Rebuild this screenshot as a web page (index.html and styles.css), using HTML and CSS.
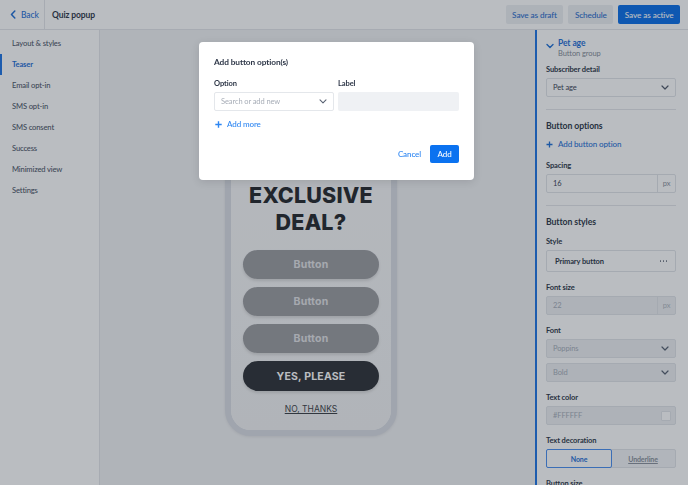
FILE: index.html
```html
<!DOCTYPE html>
<html lang="en">
<head>
<meta charset="utf-8">
<title>Quiz popup</title>
<link rel="stylesheet" href="styles.css">
</head>
<body>
<div class="app">
  <header class="topbar">
    <a class="back" href="#">
      <svg class="back-icon" width="6" height="9" viewBox="0 0 6 9"><path d="M4.8 1 L1.5 4.5 L4.8 8" fill="none" stroke="currentColor" stroke-width="1.5" stroke-linecap="round" stroke-linejoin="round"/></svg>
      <span>Back</span>
    </a>
    <div class="page-title">Quiz popup</div>
    <div class="actions">
      <button class="btn btn-secondary">Save as draft</button>
      <button class="btn btn-secondary">Schedule</button>
      <button class="btn btn-primary">Save as active</button>
    </div>
  </header>

  <div class="workspace">
    <nav class="sidebar">
      <a class="nav-item">Layout &amp; styles</a>
      <a class="nav-item active">Teaser</a>
      <a class="nav-item">Email opt-in</a>
      <a class="nav-item">SMS opt-in</a>
      <a class="nav-item">SMS consent</a>
      <a class="nav-item">Success</a>
      <a class="nav-item">Minimized view</a>
      <a class="nav-item">Settings</a>
    </nav>

    <main class="canvas">
      <div class="phone">
        <div class="phone-screen">
          <h1 class="headline">EXCLUSIVE<br>DEAL?</h1>
          <div class="quiz-buttons">
            <div class="quiz-btn">Button</div>
            <div class="quiz-btn">Button</div>
            <div class="quiz-btn">Button</div>
            <div class="quiz-btn quiz-btn-yes">YES, PLEASE</div>
          </div>
          <div class="no-thanks">NO, THANKS</div>
        </div>
      </div>
    </main>

    <aside class="panel">
      <div class="panel-head">
        <svg class="head-chevron" width="8" height="6" viewBox="0 0 8 6"><path d="M1 1.5 L4 4.5 L7 1.5" fill="none" stroke="currentColor" stroke-width="1.4" stroke-linecap="round" stroke-linejoin="round"/></svg>
        <div>
          <div class="head-title">Pet age</div>
          <div class="head-sub">Button group</div>
        </div>
      </div>

      <div class="field">
        <div class="field-label">Subscriber detail</div>
        <div class="control select"><span>Pet age</span><svg width="8" height="5" viewBox="0 0 8 5"><path d="M1 1 L4 4 L7 1" fill="none" stroke="currentColor" stroke-width="1.2" stroke-linecap="round" stroke-linejoin="round"/></svg></div>
      </div>

      <hr class="sep">

      <div class="section-title">Button options</div>
      <a class="link-add">
        <svg width="7" height="7" viewBox="0 0 7 7"><path d="M3.5 0.5 V6.5 M0.5 3.5 H6.5" stroke="currentColor" stroke-width="1.3"/></svg>
        <span>Add button option</span>
      </a>

      <div class="field">
        <div class="field-label">Spacing</div>
        <div class="control input-unit"><span class="val">16</span><span class="unit">px</span></div>
      </div>

      <hr class="sep">

      <div class="section-title">Button styles</div>

      <div class="field">
        <div class="field-label">Style</div>
        <div class="control style-box"><span class="style-name">Primary button</span><span class="dots"><i></i><i></i><i></i></span></div>
      </div>

      <div class="field">
        <div class="field-label">Font size</div>
        <div class="control input-unit disabled"><span class="val">22</span><span class="unit">px</span></div>
      </div>

      <div class="field">
        <div class="field-label">Font</div>
        <div class="control select disabled"><span>Poppins</span><svg width="8" height="5" viewBox="0 0 8 5"><path d="M1 1 L4 4 L7 1" fill="none" stroke="currentColor" stroke-width="1.2" stroke-linecap="round" stroke-linejoin="round"/></svg></div>
        <div class="control select disabled second"><span>Bold</span><svg width="8" height="5" viewBox="0 0 8 5"><path d="M1 1 L4 4 L7 1" fill="none" stroke="currentColor" stroke-width="1.2" stroke-linecap="round" stroke-linejoin="round"/></svg></div>
      </div>

      <div class="field">
        <div class="field-label">Text color</div>
        <div class="control color disabled"><span>#FFFFFF</span><span class="swatch"></span></div>
      </div>

      <div class="field">
        <div class="field-label">Text decoration</div>
        <div class="segmented">
          <span class="seg selected">None</span>
          <span class="seg underline">Underline</span>
        </div>
      </div>

      <div class="field">
        <div class="field-label">Button size</div>
      </div>
    </aside>
  </div>
</div>

<div class="backdrop"></div>

<div class="modal">
  <div class="modal-title">Add button option(s)</div>
  <div class="modal-grid">
    <div class="modal-label">Option</div>
    <div class="modal-label">Label</div>
    <div class="modal-select"><span>Search or add new</span><svg width="8" height="5" viewBox="0 0 8 5"><path d="M1 0.8 L4 3.8 L7 0.8" fill="none" stroke="currentColor" stroke-width="1.1" stroke-linecap="round" stroke-linejoin="round"/></svg></div>
    <div class="modal-input"></div>
  </div>
  <a class="modal-add">
    <svg width="7" height="7" viewBox="0 0 7 7"><path d="M3.5 0.3 V6.7 M0.3 3.5 H6.7" stroke="currentColor" stroke-width="1.4"/></svg>
    <span>Add more</span>
  </a>
  <div class="modal-actions">
    <button class="m-cancel">Cancel</button>
    <button class="m-add">Add</button>
  </div>
</div>
</body>
</html>
```

FILE: styles.css
```css
* { box-sizing: border-box; }
html, body { margin: 0; padding: 0; }
body {
  width: 688px;
  height: 485px;
  overflow: hidden;
  font-family: "Lato", "Liberation Sans", sans-serif;
  letter-spacing: -0.1px;
  color: #2e3748;
  background: #fff;
}
button { font-family: inherit; letter-spacing: inherit; }

.app {
  display: flex;
  flex-direction: column;
  height: 485px;
}

/* top bar */
.topbar {
  height: 30px;
  flex: none;
  display: flex;
  align-items: center;
  background: #fff;
  border-bottom: 1px solid #e4e6ea;
}
.back {
  height: 100%;
  width: 45px;
  display: flex;
  align-items: center;
  gap: 5px;
  padding-left: 10px;
  color: #1f6fd6;
  text-decoration: none;
  font-size: 8.5px;
  font-weight: 500;
  border-right: 1px solid #e4e6ea;
}
.page-title {
  margin-left: 7px;
  font-size: 8.5px;
  font-weight: 700;
  color: #2e3748;
}
.actions {
  margin-left: auto;
  margin-right: 8px;
  display: flex;
  gap: 5px;
}
.btn {
  height: 19px;
  border: 0;
  border-radius: 2px;
  font-size: 8.2px;
  font-weight: 500;
  padding: 0 6.5px;
}
.btn-secondary { background: #eceff3; color: #2b6dcc; }
.btn-primary { background: #0b6fe8; color: #fff; }

/* workspace */
.workspace {
  flex: 1;
  display: flex;
  min-height: 0;
}
.sidebar {
  width: 100px;
  flex: none;
  background: #fff;
  border-right: 1px solid #e4e6ea;
  padding-top: 3px;
  display: flex;
  flex-direction: column;
}
.nav-item {
  height: 21px;
  line-height: 21px;
  padding-left: 10px;
  font-size: 7.6px;
  font-weight: 500;
  letter-spacing: -0.15px;
  color: #4f5869;
  border-left: 2px solid transparent;
}
.nav-item.active {
  color: #1f6fd6;
  font-weight: 700;
  border-left-color: #1f74e4;
}

/* canvas */
.canvas {
  flex: 1;
  background: #f1f2f4;
  display: flex;
  align-items: flex-end;
  padding-left: 125px;
  padding-bottom: 49px;
  overflow: hidden;
}
.phone {
  width: 172px;
  height: 380px;
  border: 6px solid #dadde4;
  border-radius: 26px;
  background: #f6f6f7;
  box-shadow: 0 1px 3px rgba(0,0,0,0.08);
}
.phone-screen {
  height: 100%;
  display: flex;
  flex-direction: column;
  align-items: center;
  padding-top: 120px;
  background: linear-gradient(180deg, #f9f9fa 0%, #f2f3f4 100%);
  border-radius: 20px;
}
.headline {
  margin: 0;
  font-family: "Inter", "Liberation Sans", sans-serif;
  font-weight: 800;
  font-size: 21.5px;
  line-height: 27px;
  color: #25272b;
  text-align: center;
  letter-spacing: 0.2px;
}
.quiz-buttons {
  margin-top: 14px;
  display: flex;
  flex-direction: column;
  gap: 8px;
}
.quiz-btn {
  width: 136px;
  height: 29px;
  border-radius: 15px;
  background: #9b9ca0;
  color: #e2e3e5;
  font-family: "Inter", "Liberation Sans", sans-serif;
  font-weight: 700;
  font-size: 10.5px;
  letter-spacing: 0.2px;
  display: flex;
  align-items: center;
  justify-content: center;
  box-shadow: 0 2px 3px rgba(0,0,0,0.12);
}
.quiz-btn-yes {
  background: #2f3237;
  color: #fff;
  height: 30px;
}
.no-thanks {
  margin-top: 13px;
  font-family: "Inter", "Liberation Sans", sans-serif;
  font-size: 8.5px;
  color: #3c3f45;
  text-decoration: underline;
  letter-spacing: 0;
}

/* right panel */
.panel {
  width: 153px;
  flex: none;
  background: #fff;
  border-left: 2px solid #1f74e4;
  padding: 7px 12px 0 9px;
  overflow: hidden;
}
.panel-head {
  display: flex;
  gap: 4px;
  align-items: flex-start;
}
.head-chevron {
  margin-top: 6px;
  color: #1f6fd6;
}
.head-title {
  font-size: 8.5px;
  font-weight: 700;
  color: #1f6fd6;
  line-height: 12px;
}
.head-sub {
  font-size: 7.5px;
  color: #858c98;
  line-height: 10px;
}
.field { margin-top: 5px; }
.field + .field { margin-top: 10px; }
.section-title + .field { margin-top: 8px; }
.link-add + .field { margin-top: 10px; }
.field-label {
  font-size: 7.5px;
  font-weight: 700;
  line-height: 12px;
  margin-bottom: 2px;
  color: #2e3748;
}
.control {
  height: 19px;
  border: 1px solid #e1e4e9;
  border-radius: 2px;
  display: flex;
  align-items: center;
  padding-left: 6px;
  font-size: 7.5px;
  color: #3a4354;
}
.select { justify-content: space-between; padding-right: 6px; }
.select svg { color: #4f5869; }
.select.second { margin-top: 5px; }
.disabled { background: #eef0f3; color: #a6adb8; }
.disabled svg { color: #566070; }
.input-unit { padding: 0; }
.input-unit .val { flex: 1; padding-left: 6px; }
.input-unit .unit {
  width: 18px;
  height: 100%;
  border-left: 1px solid #e1e4e9;
  display: flex;
  align-items: center;
  justify-content: center;
  color: #8a919c;
}
.input-unit.disabled .unit { color: #b2b8c1; }
.style-box {
  height: 22px;
  padding: 0 8px 0 8px;
  justify-content: space-between;
}
.style-name { font-weight: 700; color: #2e3748; }
.dots { display: flex; gap: 1.5px; }
.dots i {
  display: block;
  width: 1.5px;
  height: 1.5px;
  background: #6f7785;
  border-radius: 50%;
}
.color { justify-content: space-between; padding-right: 4px; }
.swatch {
  width: 10px;
  height: 10px;
  background: #fff;
  border: 1px solid #e1e4e9;
  border-radius: 1px;
}
.sep {
  border: 0;
  border-top: 1px solid #e4e6ea;
  margin: 12px 0 0;
}
.section-title {
  margin-top: 9px;
  font-size: 8.7px;
  font-weight: 700;
  line-height: 13px;
  color: #2e3748;
}
.link-add {
  margin-top: 6px;
  display: flex;
  align-items: center;
  gap: 5px;
  height: 12px;
  color: #1f6fd6;
  font-size: 8px;
  font-weight: 500;
}
.segmented {
  display: flex;
  height: 19px;
  border: 1px solid #e1e4e9;
  border-radius: 2px;
  background: #f2f4f6;
}
.seg {
  flex: 1;
  display: flex;
  align-items: center;
  justify-content: center;
  font-size: 7px;
  color: #8a919c;
}
.seg.selected {
  background: #fff;
  border: 1px solid #4a8ff0;
  border-radius: 2px;
  margin: -1px;
  color: #1f6fd6;
  font-weight: 700;
}
.seg.underline { text-decoration: underline; font-weight: 700; }

/* backdrop + modal */
.backdrop {
  position: fixed;
  inset: 0;
  background: rgba(28, 35, 50, 0.3);
  z-index: 10;
}
.modal {
  position: fixed;
  left: 199px;
  top: 42px;
  width: 275px;
  height: 138px;
  background: #fff;
  border-radius: 4px;
  z-index: 20;
  padding: 14px 15px 0 15px;
  box-shadow: 0 2px 8px rgba(0,0,0,0.12);
}
.modal-title {
  font-size: 8.3px;
  font-weight: 700;
  color: #2e3748;
  line-height: 13px;
}
.modal-grid {
  margin-top: 9px;
  display: grid;
  grid-template-columns: 120px 121px;
  column-gap: 4px;
  row-gap: 3px;
}
.modal-label {
  font-size: 7.5px;
  font-weight: 700;
  line-height: 11px;
  color: #2e3748;
}
.modal-select {
  height: 19px;
  border: 1px solid #e4e7eb;
  border-radius: 2px;
  display: flex;
  align-items: center;
  justify-content: space-between;
  padding: 0 6px 0 6px;
  font-size: 7.5px;
  color: #a7adb7;
}
.modal-select svg { color: #5b6474; }
.modal-input {
  height: 19px;
  border-radius: 2px;
  background: #eff1f4;
}
.modal-add {
  margin-top: 8px;
  display: flex;
  align-items: center;
  gap: 5px;
  padding-left: 1px;
  font-size: 8px;
  font-weight: 500;
  color: #2d86f2;
  height: 10px;
}
.modal-actions {
  margin-top: 16px;
  display: flex;
  justify-content: flex-end;
  align-items: center;
  gap: 9px;
}
.m-cancel {
  background: none;
  border: 0;
  padding: 0;
  font-size: 8px;
  font-weight: 500;
  color: #2d86f2;
}
.m-add {
  width: 29px;
  height: 18px;
  border: 0;
  border-radius: 2px;
  background: #0b72f0;
  color: #fff;
  font-size: 8px;
  font-weight: 500;
}
```
